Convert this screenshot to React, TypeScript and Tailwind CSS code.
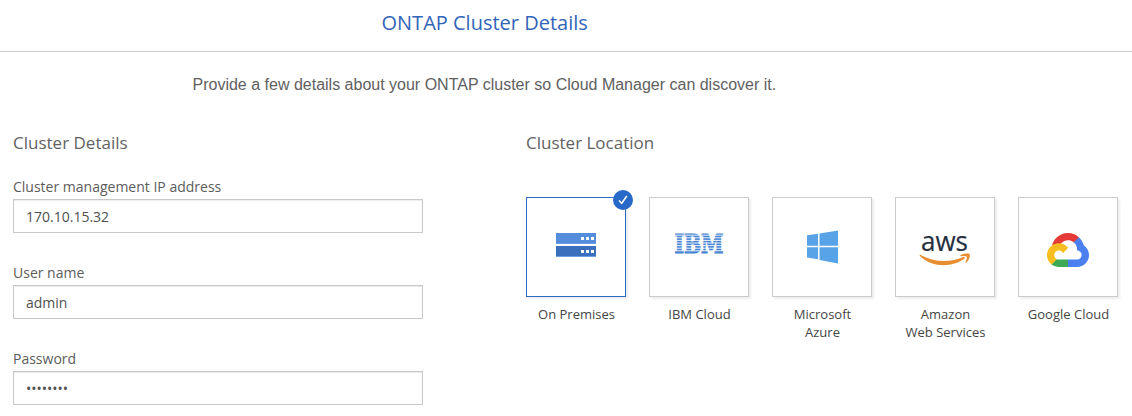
import type { ReactNode } from "react";

function ServerIcon() {
  return (
    <svg width="40" height="24" viewBox="0 0 40 24" className="-mt-1">
      <rect width="40" height="11" fill="#538ddc" />
      <rect y="13" width="40" height="11" fill="#396fbd" />
      <path d="M0 10.5h40M0 23.5h40" stroke="#6c9ee4" />
      <path d="M25 4h3v3h-3zM30 4h3v3h-3zM35 4h3v3h-3zM25 17h3v3h-3zM30 17h3v3h-3zM35 17h3v3h-3z" fill="#fff" />
    </svg>
  );
}

function IbmLogo() {
  return (
    <svg width="60" height="44" viewBox="-5 -12 60 44" className="-mt-2">
      <text
        x="0.5"
        y="19.7"
        textLength="49"
        lengthAdjust="spacingAndGlyphs"
        fontSize="26.4"
        fontWeight="700"
        fill="#4683d3"
        stroke="#4683d3"
        strokeWidth="1.2"
        className="font-['DejaVu_Serif',serif]"
      >
        IBM
      </text>
      <path
        d="M-1 2.2h52M-1 4.8h52M-1 7.4h52M-1 10h52M-1 12.6h52M-1 15.2h52M-1 17.8h52"
        stroke="#fff"
        strokeWidth="0.9"
      />
    </svg>
  );
}

function WindowsLogo() {
  return (
    <svg width="31" height="34" viewBox="0 0 31 34" fill="#58a3e8">
      <path d="M0 5.3 11 3.8V15.8H0zM12.5 3.5 31 .5V15.8H12.5zM0 17.2H11V29.2L0 27.6zM12.5 17.2H31V33.5L12.5 30.1z" />
    </svg>
  );
}

function AwsLogo() {
  return (
    <svg width="52" height="56" viewBox="0 -10 52 56" className="mt-0.5">
      <text
        x="2"
        y="20.5"
        textLength="47"
        lengthAdjust="spacingAndGlyphs"
        fontSize="27"
        fontWeight="500"
        fill="#252f3e"
        stroke="#252f3e"
        strokeWidth="0.2"
        className="font-['Open_Sans',sans-serif]"
      >
        aws
      </text>
      <path
        d="M1.2 24.8C15 32.5 31 33 44.3 27.1c1.5-.6 2.3.7 1 1.7C32.500 38 12.500 37.500 1 26c-.7-.7-.4-1.500.2-1.200z"
        fill="#e88d30"
      />
      <path
        d="M41.5 25.200c3-2 8.100-2.200 9.100-1.200.9 1.200-.4 6-3.200 8.600-.6.5-1.100.2-.8-.5.7-1.700 1.700-4.500 1.100-5.300-.7-.8-3.900-.8-5.600-.6-.8.1-1.200-.5-.6-1z"
        fill="#e88d30"
      />
    </svg>
  );
}

function GoogleCloudLogo() {
  return (
    <svg width="42" height="34" viewBox="0 0 256 206" preserveAspectRatio="none" className="mt-1.5">
      <path d="M170.25 56.82 192.5 34.57 193.99 25.2C153.44-11.68 88.98-7.5 52.42 33.92 42.27 45.42 34.73 59.76 30.72 74.57L38.69 73.45 83.19 66.11 86.63 62.6C106.42 40.85 139.9 37.93 162.76 56.43z" fill="#e53a35" />
      <path d="M224.2 73.92C219.09 55.08 208.59 38.15 193.99 25.2L162.76 56.43C175.94 67.2 183.46 83.44 183.13 100.47V106.01C198.49 106.01 210.93 118.45 210.93 133.81 210.93 149.16 198.49 161.29 183.13 161.29H127.46L122 167.22V200.56L127.46 205.8H183.13C223.06 206.11 255.69 174.3 256 134.37 256.19 110.17 244.25 87.48 224.2 73.92" fill="#4c80f0" />
      <path d="M71.87 205.8H127.46V161.29H71.87C67.91 161.29 64.07 160.44 60.47 158.79L52.58 161.21 30.18 183.46 28.22 191.04C40.79 200.53 56.12 205.86 71.87 205.8" fill="#3da953" />
      <path d="M71.87 61.43C31.94 61.66-.24 94.23 0 134.16.13 156.46 10.55 177.45 28.22 191.04L60.47 158.79C46.48 152.47 40.26 136.01 46.58 122.02 52.91 108.03 69.37 101.81 83.36 108.13 89.52 110.91 94.46 115.85 97.25 122.02L129.49 89.77C115.77 71.83 94.45 61.34 71.87 61.43" fill="#f9bd20" />
    </svg>
  );
}

function Field({ label, value, type = "text" }: { label: string; value: string; type?: string }) {
  return (
    <label className="flex h-[86px] flex-col text-sm leading-5 text-[#5c5c5c]">
      <span className="mb-[2px]">{label}</span>
      <input
        type={type}
        defaultValue={value}
        className="h-[34px] w-[410px] border border-[#c8c8c8] bg-white px-3 text-sm text-[#505050] shadow-[inset_0_1px_1px_#ececec] outline-none"
      />
    </label>
  );
}

function LocationCard({ label, selected = false, children }: { label: ReactNode; selected?: boolean; children: ReactNode }) {
  return (
    <button type="button" className="flex w-[100px] flex-col items-center">
      <span
        className={
          selected
            ? "relative flex size-[100px] items-center justify-center border border-[#2b6bc4] shadow-[2px_2px_2px_#ededed]"
            : "relative flex size-[100px] items-center justify-center border border-[#cbcbcb] shadow-[2px_2px_2px_#ededed]"
        }
      >
        {children}
        {selected && (
          <span className="absolute -top-2 -right-2 flex size-5 items-center justify-center rounded-full bg-[#2868c8]">
            <svg width="10" height="10" viewBox="0 0 10 10" fill="none" stroke="#fff" strokeWidth="1.5">
              <path d="M1 5.500 3.700 8.300 8.800 1" />
            </svg>
          </span>
        )}
      </span>
      <span className="mt-2 pl-px text-[13px] leading-[18px] whitespace-nowrap text-[#454545]">{label}</span>
    </button>
  );
}

export default function App() {
  return (
    <main className="flex h-[416px] w-[1132px] flex-col overflow-hidden bg-white font-['Open_Sans',sans-serif]">
      <header className="flex h-[52px] shrink-0 border-b border-[#cbcbcb] pt-[9px] pl-[381.5px]">
        <h1 className="text-xl leading-7 whitespace-nowrap text-[#3264b8]">ONTAP Cluster Details</h1>
      </header>
      <p className="mt-[21px] pl-[192.500px] font-['Liberation_Sans',sans-serif] text-base leading-6 whitespace-nowrap text-[#606060]">
        Provide a few details about your ONTAP cluster so Cloud Manager can discover it.
      </p>
      <div className="mt-[34px] flex pl-[13px]">
        <section className="w-[513px]">
          <h2 className="text-[17px] leading-6 text-[#626262]">Cluster Details</h2>
          <div className="mt-[22px]">
            <Field label="Cluster management IP address" value="170.10.15.32" />
            <Field label="User name" value="admin" />
            <Field label="Password" value="password" type="password" />
          </div>
        </section>
        <section>
          <h2 className="text-[17px] leading-6 text-[#626262]">Cluster Location</h2>
          <div className="mt-[42px] flex items-start gap-[23px]">
            <LocationCard label="On Premises" selected>
              <ServerIcon />
            </LocationCard>
            <LocationCard label="IBM Cloud">
              <IbmLogo />
            </LocationCard>
            <LocationCard label={<>Microsoft<br />Azure</>}>
              <WindowsLogo />
            </LocationCard>
            <LocationCard label={<>Amazon<br />Web Services</>}>
              <AwsLogo />
            </LocationCard>
            <LocationCard label="Google Cloud">
              <GoogleCloudLogo />
            </LocationCard>
          </div>
        </section>
      </div>
    </main>
  );
}
